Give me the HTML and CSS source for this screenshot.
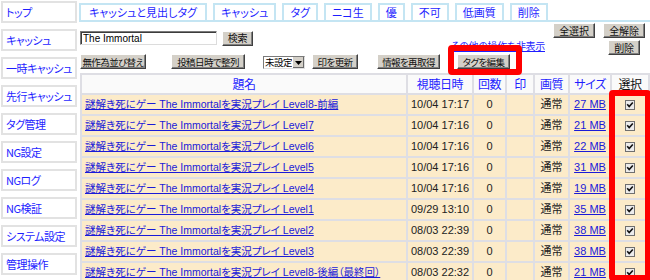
FILE: index.html
```html
<!DOCTYPE html>
<html lang="ja">
<head>
<meta charset="utf-8">
<title>キャッシュ</title>
<link rel="stylesheet" href="styles.css">
</head>
<body>
<div class="page">
  <nav class="side">
    <a class="side-item" href="#">トップ</a>
    <a class="side-item" href="#">キャッシュ</a>
    <a class="side-item" href="#">一時キャッシュ</a>
    <a class="side-item" href="#">先行キャッシュ</a>
    <a class="side-item" href="#">タグ管理</a>
    <a class="side-item" href="#">NG設定</a>
    <a class="side-item" href="#">NGログ</a>
    <a class="side-item" href="#">NG検証</a>
    <a class="side-item" href="#">システム設定</a>
    <a class="side-item" href="#">管理操作</a>
  </nav>
  <main class="main">
    <div class="tabs">
      <a class="tab tab-wide" href="#">キャッシュと見出しタグ</a>
      <a class="tab" href="#">キャッシュ</a>
      <a class="tab" href="#">タグ</a>
      <a class="tab" href="#">ニコ生</a>
      <a class="tab" href="#">優</a>
      <a class="tab" href="#">不可</a>
      <a class="tab" href="#">低画質</a>
      <a class="tab" href="#">削除</a>
    </div>
    <div class="controls">
      <div class="search">
        <input class="search-input" type="text" value="The Immortal">
        <button class="btn w31">検索</button>
      </div>
      <div class="bulk">
        <div class="bulk-row">
          <button class="btn w42">全選択</button>
          <button class="btn w42">全解除</button>
        </div>
        <div class="bulk-row bulk-row-2">
          <a class="more" href="#">その他の操作を非表示</a>
          <button class="btn w32">削除</button>
        </div>
      </div>
    </div>
    <div class="toolbar">
      <button class="btn tight w66">無作為並び替え</button>
      <button class="btn tight w74 gap-25">投稿日時で整列</button>
      <span class="select gap-18"><span class="select-value">未設定</span><span class="select-arrow"><svg width="7" height="4" viewBox="0 0 7 4"><path d="M0 0h7L3.5 4z" fill="#000"/></svg></span></span>
      <button class="btn tight w46 gap-7">印を更新</button>
      <button class="btn tight w63 gap-19">情報を再取得</button>
      <button class="btn tight w53 gap-17">タグを編集</button>
    </div>
    <table class="list">
      <colgroup>
        <col class="c-title"><col class="c-date"><col class="c-count"><col class="c-mark"><col class="c-quality"><col class="c-size"><col class="c-sel">
      </colgroup>
      <thead>
        <tr class="head">
          <th><a href="#">題名</a></th>
          <th><a href="#">視聴日時</a></th>
          <th><a href="#">回数</a></th>
          <th><a href="#">印</a></th>
          <th><a href="#">画質</a></th>
          <th><a href="#">サイズ</a></th>
          <th class="plain">選択</th>
        </tr>
      </thead>
      <tbody>
        <tr><td class="title"><a href="#">謎解き死にゲー The Immortalを実況プレイ Level8-前編</a></td><td class="num">10/04 17:17</td><td class="num">0</td><td></td><td class="q">通常</td><td class="num"><a href="#">27 MB</a></td><td class="sel"><svg class="chk" width="10" height="10" viewBox="0 0 10 10"><rect x="0.5" y="0.5" width="9" height="9" fill="#ececec" stroke="#6f6f6f"/><path d="M2.2 4.2 4.2 6.6 7.8 2.4" stroke="#111" stroke-width="1.6" fill="none"/></svg></td></tr>
        <tr><td class="title"><a href="#">謎解き死にゲー The Immortalを実況プレイ Level7</a></td><td class="num">10/04 17:16</td><td class="num">0</td><td></td><td class="q">通常</td><td class="num"><a href="#">21 MB</a></td><td class="sel"><svg class="chk" width="10" height="10" viewBox="0 0 10 10"><rect x="0.5" y="0.5" width="9" height="9" fill="#ececec" stroke="#6f6f6f"/><path d="M2.2 4.2 4.2 6.6 7.8 2.4" stroke="#111" stroke-width="1.6" fill="none"/></svg></td></tr>
        <tr><td class="title"><a href="#">謎解き死にゲー The Immortalを実況プレイ Level6</a></td><td class="num">10/04 17:16</td><td class="num">0</td><td></td><td class="q">通常</td><td class="num"><a href="#">22 MB</a></td><td class="sel"><svg class="chk" width="10" height="10" viewBox="0 0 10 10"><rect x="0.5" y="0.5" width="9" height="9" fill="#ececec" stroke="#6f6f6f"/><path d="M2.2 4.2 4.2 6.6 7.8 2.4" stroke="#111" stroke-width="1.6" fill="none"/></svg></td></tr>
        <tr><td class="title"><a href="#">謎解き死にゲー The Immortalを実況プレイ Level5</a></td><td class="num">10/04 17:16</td><td class="num">0</td><td></td><td class="q">通常</td><td class="num"><a href="#">31 MB</a></td><td class="sel"><svg class="chk" width="10" height="10" viewBox="0 0 10 10"><rect x="0.5" y="0.5" width="9" height="9" fill="#ececec" stroke="#6f6f6f"/><path d="M2.2 4.2 4.2 6.6 7.8 2.4" stroke="#111" stroke-width="1.6" fill="none"/></svg></td></tr>
        <tr><td class="title"><a href="#">謎解き死にゲー The Immortalを実況プレイ Level4</a></td><td class="num">10/04 17:16</td><td class="num">0</td><td></td><td class="q">通常</td><td class="num"><a href="#">19 MB</a></td><td class="sel"><svg class="chk" width="10" height="10" viewBox="0 0 10 10"><rect x="0.5" y="0.5" width="9" height="9" fill="#ececec" stroke="#6f6f6f"/><path d="M2.2 4.2 4.2 6.6 7.8 2.4" stroke="#111" stroke-width="1.6" fill="none"/></svg></td></tr>
        <tr><td class="title"><a href="#">謎解き死にゲー The Immortalを実況プレイ Level1</a></td><td class="num">09/29 13:10</td><td class="num">0</td><td></td><td class="q">通常</td><td class="num"><a href="#">35 MB</a></td><td class="sel"><svg class="chk" width="10" height="10" viewBox="0 0 10 10"><rect x="0.5" y="0.5" width="9" height="9" fill="#ececec" stroke="#6f6f6f"/><path d="M2.2 4.2 4.2 6.6 7.8 2.4" stroke="#111" stroke-width="1.6" fill="none"/></svg></td></tr>
        <tr><td class="title"><a href="#">謎解き死にゲー The Immortalを実況プレイ Level2</a></td><td class="num">08/03 22:39</td><td class="num">0</td><td></td><td class="q">通常</td><td class="num"><a href="#">38 MB</a></td><td class="sel"><svg class="chk" width="10" height="10" viewBox="0 0 10 10"><rect x="0.5" y="0.5" width="9" height="9" fill="#ececec" stroke="#6f6f6f"/><path d="M2.2 4.2 4.2 6.6 7.8 2.4" stroke="#111" stroke-width="1.6" fill="none"/></svg></td></tr>
        <tr><td class="title"><a href="#">謎解き死にゲー The Immortalを実況プレイ Level3</a></td><td class="num">08/03 22:39</td><td class="num">0</td><td></td><td class="q">通常</td><td class="num"><a href="#">38 MB</a></td><td class="sel"><svg class="chk" width="10" height="10" viewBox="0 0 10 10"><rect x="0.5" y="0.5" width="9" height="9" fill="#ececec" stroke="#6f6f6f"/><path d="M2.2 4.2 4.2 6.6 7.8 2.4" stroke="#111" stroke-width="1.6" fill="none"/></svg></td></tr>
        <tr><td class="title"><a href="#">謎解き死にゲー The Immortalを実況プレイ Level8-後編（最終回）</a></td><td class="num">08/03 22:32</td><td class="num">0</td><td></td><td class="q">通常</td><td class="num"><a href="#">21 MB</a></td><td class="sel"><svg class="chk" width="10" height="10" viewBox="0 0 10 10"><rect x="0.5" y="0.5" width="9" height="9" fill="#ececec" stroke="#6f6f6f"/><path d="M2.2 4.2 4.2 6.6 7.8 2.4" stroke="#111" stroke-width="1.6" fill="none"/></svg></td></tr>
      </tbody>
    </table>
  </main>
  <div class="mark mark-tag"></div>
  <div class="mark mark-select"></div>
</div>
</body>
</html>
```

FILE: styles.css
```css
html, body {
  margin: 0;
  padding: 0;
  background: #fff;
}

body {
  font-family: "Noto Sans CJK JP", sans-serif;
  font-feature-settings: "palt";
  font-size: 11px;
  color: #000;
}

.page {
  position: relative;
  display: flex;
  gap: 3px;
  width: 650px;
  height: 280px;
  overflow: hidden;
}

/* sidebar */
.side {
  flex: none;
  width: 76px;
  margin-left: 1px;
  padding-top: 1px;
  display: flex;
  flex-direction: column;
  gap: 6px;
}

.side-item {
  display: block;
  height: 22px;
  box-sizing: border-box;
  border: 2px solid #e2e2e2;
  padding-left: 3px;
  line-height: 18px;
  font-size: 11px;
  letter-spacing: -0.5px;
  color: #1e1eff;
  text-decoration: none;
  white-space: nowrap;
  overflow: hidden;
}

/* main */
.main {
  flex: 1;
  min-width: 0;
}

.tabs {
  display: flex;
  gap: 6px;
  padding-top: 3px;
  margin-left: -1px;
  border-bottom: 2px solid #c4e5f3;
}

.tab {
  height: 17px;
  box-sizing: border-box;
  border: 2px solid #c4e5f3;
  border-bottom: none;
  padding: 0 6px;
  line-height: 15px;
  font-size: 11px;
  color: #1e1eff;
  text-decoration: none;
  white-space: nowrap;
}

.tab-wide {
  padding: 0 8px;
}

.controls {
  display: flex;
  justify-content: space-between;
  height: 32px;
}

.search {
  display: flex;
  align-items: center;
  gap: 5px;
  margin-top: 8px;
  height: 16px;
}

.search-input {
  width: 137px;
  height: 14px;
  box-sizing: border-box;
  margin: 0;
  padding: 0 2px;
  border: 1px solid;
  border-color: #7a7a7a #dcdcdc #dcdcdc #7a7a7a;
  box-shadow: inset 1px 1px 0 #3c3c3c;
  font-family: "Liberation Sans", sans-serif;
  font-size: 10px;
  color: #000;
  outline: none;
}

.btn {
  height: 15px;
  box-sizing: border-box;
  margin: 0;
  padding: 0;
  background: #d4d0c8;
  border: 1px solid;
  border-color: #ffffff #404040 #404040 #ffffff;
  box-shadow: inset -1px -1px 0 #808080;
  font-family: "Noto Sans CJK JP", sans-serif;
  font-feature-settings: "palt";
  font-size: 10px;
  line-height: 12px;
  letter-spacing: -0.2px;
  color: #111;
  white-space: nowrap;
  text-align: center;
  flex: none;
  overflow: hidden;
}

.btn.tight {
  font-size: 9.5px;
  letter-spacing: -0.6px;
}

.w31 { width: 31px; }
.w32 { width: 32px; }
.w42 { width: 42px; }
.w46 { width: 46px; }
.w53 { width: 53px; }
.w63 { width: 63px; }
.w66 { width: 66px; }
.w74 { width: 74px; }

.bulk {
  display: flex;
  flex-direction: column;
  align-items: flex-end;
  gap: 2px;
  padding-top: 1px;
  margin-right: 5px;
}

.bulk-row {
  display: flex;
  gap: 8px;
  align-items: flex-start;
}

.bulk-row-2 {
  margin-right: 5px;
}

.more {
  margin-top: 1px;
  margin-right: 55px;
  font-size: 10px;
  line-height: 10px;
  letter-spacing: -0.3px;
  color: #1e1eff;
  text-decoration: underline;
  white-space: nowrap;
}

.toolbar {
  display: flex;
  align-items: center;
  height: 15px;
}

.gap-25 { margin-left: 25px; }
.gap-19 { margin-left: 19px; }
.gap-18 { margin-left: 18px; }
.gap-17 { margin-left: 17px; }
.gap-7 { margin-left: 7px; }

.select {
  display: inline-flex;
  align-items: stretch;
  flex: none;
  width: 42px;
  height: 13px;
  box-sizing: border-box;
  margin-top: 2px;
  border: 1px solid;
  border-color: #7a7a7a #e0e0e0 #e0e0e0 #7a7a7a;
  background: #fff;
}

.select-value {
  flex: 1;
  min-width: 0;
  padding-left: 1px;
  font-size: 9.5px;
  letter-spacing: -0.5px;
  line-height: 11px;
  white-space: nowrap;
}

.select-arrow {
  width: 11px;
  flex: none;
  display: flex;
  align-items: center;
  justify-content: center;
  background: #d4d0c8;
  border-left: 1px solid #fff;
  box-shadow: inset -1px -1px 0 #6a6a6a;
}

/* table */
.list {
  margin-top: 4px;
  width: 568px;
  table-layout: fixed;
  border-collapse: collapse;
}

.c-title { width: 326px; }
.c-date { width: 66px; }
.c-count { width: 33px; }
.c-mark { width: 28px; }
.c-quality { width: 35px; }
.c-size { width: 42px; }
.c-sel { width: 38px; }

.list th,
.list td {
  border: 2px solid #dedee4;
  padding: 0;
  white-space: nowrap;
  overflow: hidden;
}

.list tr.head {
  height: 20px;
}

.list th {
  background: #fafafa;
  font-size: 12px;
  font-weight: normal;
  text-align: center;
  line-height: 16px;
  letter-spacing: -0.4px;
}

.list th a {
  color: #1e1eff;
  text-decoration: none;
}

.list th.plain {
  color: #111;
}

.list tbody tr {
  height: 21px;
}

.list td {
  background: #fcebc9;
  font-family: "Liberation Sans", "Noto Sans CJK JP", sans-serif;
  font-size: 11px;
  line-height: 15px;
  color: #222;
  text-align: center;
}

.list td a {
  color: #1a1ad8;
  text-decoration: underline;
}

.list td.title {
  text-align: left;
  padding-left: 3px;
  font-size: 10.5px;
}

.list td.sel {
  line-height: 0;
}

.chk {
  display: inline-block;
  vertical-align: middle;
}

/* annotation marks */
.mark {
  position: absolute;
  box-sizing: border-box;
  border: 6px solid #ff0000;
  border-radius: 4px;
}

.mark-tag {
  left: 448px;
  top: 45px;
  width: 74px;
  height: 30px;
}

.mark-select {
  left: 609px;
  top: 90px;
  width: 42px;
  height: 191px;
}
```
